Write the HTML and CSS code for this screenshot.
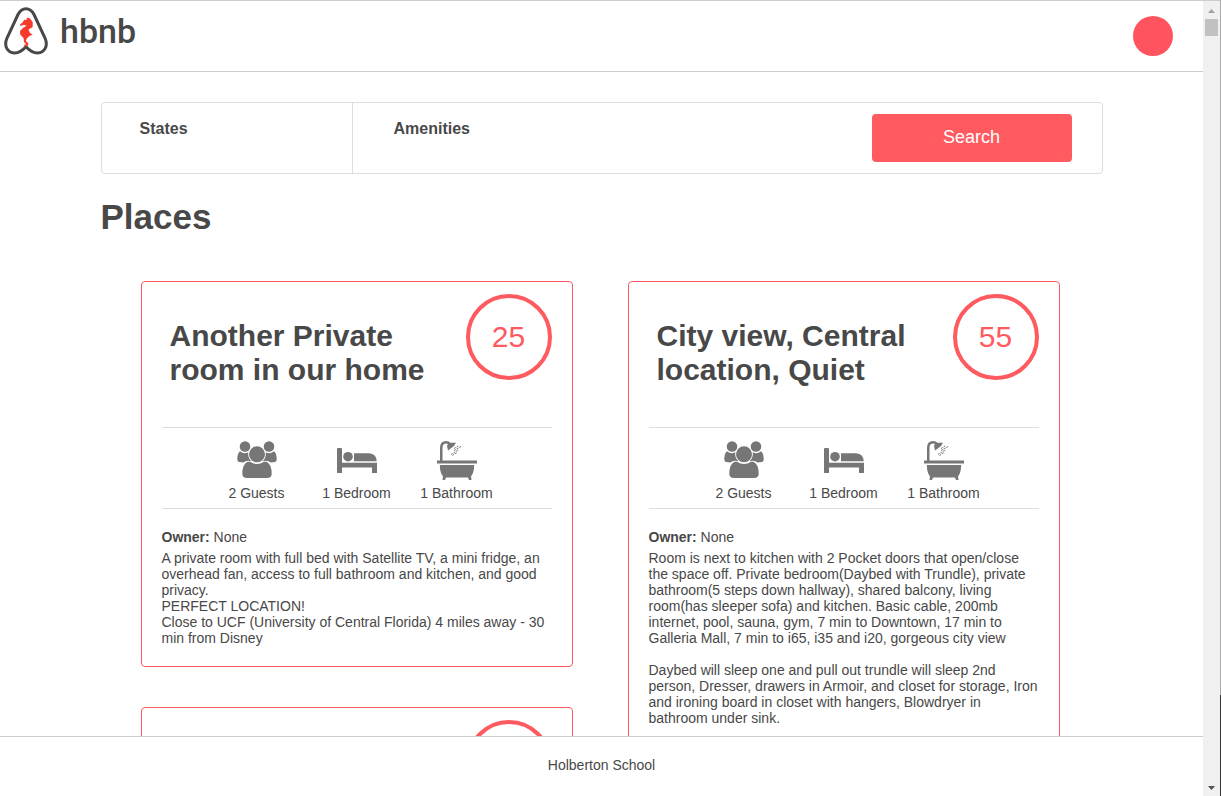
FILE: index.html
```html
<!DOCTYPE html>
<html lang="en">
<head>
<meta charset="utf-8">
<title>hbnb</title>
<link rel="stylesheet" href="styles.css">
</head>
<body>
<svg class="sprite" aria-hidden="true">
  <symbol id="guests" viewBox="0 0 40 40">
    <circle cx="8" cy="6.500" r="5.300"/><circle cx="32" cy="6.500" r="5.300"/>
    <path d="M3 11.200Q7 14.500 11.300 12.200Q10.500 18 14.500 21.200Q9 20 6.500 22.500L2 22Q.3 21.500 .3 19.500Q.3 13 3 11.200ZM37 11.200Q33 14.500 28.700 12.200Q29.500 18 25.500 21.200Q31 20 33.500 22.500L38 22Q39.700 21.500 39.700 19.500Q39.700 13 37 11.200Z"/>
    <circle cx="20" cy="14.300" r="8"/>
    <path d="M10.500 21.700H13Q20 26.500 27 21.700H29.500Q34.700 24 34.700 34Q34.500 38 30 38H10Q5.500 38 5.300 34Q5.300 24 10.500 21.700Z"/>
  </symbol>
  <symbol id="bed" viewBox="0 0 40 40">
    <path d="M0 9Q0 8 1 8H4Q5 8 5 9V22.700H40V33H35V27.500H5V33H0ZM17 13.300H32Q39.500 13.800 39.700 21.200H17Z"/>
    <circle cx="11" cy="16.700" r="4.800"/>
  </symbol>
  <symbol id="bath" viewBox="0 0 40 40">
    <path d="M3 21V8Q3 1 9 1Q12 1 13.500 2.700H19L17 6L11 10.500L10 6L11 4Q10 3.500 9 3.500Q5.500 3.500 5.500 8V21ZM0 20.500H40V23.500H0ZM2.800 25H37.200Q37 33 34 36.500L34.500 40H32L31 37.500H9L8 40H5.500L6 36.500Q3 33 2.800 25Z"/>
    <path class="drops" d="M17 8.500L22 5.500M17 10.500L24 6.500M14 14.500L22 9.500M15.500 15.500L20 12.500"/>
  </symbol>
</svg>
<div class="window">
  <div class="page">
    <header class="header">
      <a class="brand" href="#" aria-label="hbnb">
        <svg class="mark" viewBox="0 0 44 48" aria-hidden="true">
          <path class="mark-line" d="M22 1.700C26 1.700 28 3.500 30 7.500L41 31C44.500 39 40.500 45.700 33.500 46C29 46 25.500 43.500 22 39.700C18.500 43.500 15 46 10.500 46C3.500 45.700 -.5 39 3 31L14 7.500C16 3.500 18 1.700 22 1.700Z"/>
          <path class="horse" d="M23 10.500L26 11.500L28.700 15V20L24.500 22.500L26 26L28.700 27.500L25.500 29L22.700 31.500L22 34L24.500 36.500L23.700 39L20.500 39.200L20 37.500L22.500 37.500L20 35L19.500 31L16.200 27.500L16 24L19 21L22.500 18.700L20 17.700L16.300 19L16 17.500L19 15L20 12.700L22.500 13Z"/>
        </svg>
        <span class="brand-name">hbnb</span>
      </a>
      <span class="status"></span>
    </header>
    <main class="main">
      <div class="container">
        <section class="filters">
          <div class="filter states"><h3>States</h3></div>
          <div class="filter amenities"><h3>Amenities</h3></div>
          <button class="search" type="button">Search</button>
        </section>
        <h1 class="heading">Places</h1>
        <section class="places">
          <div class="column">
            <article class="card">
              <div class="card-head"><h2>Another Private room in our home</h2><div class="price">25</div></div>
              <ul class="facts">
                <li><svg><use href="#guests"/></svg>2 Guests</li>
                <li><svg><use href="#bed"/></svg>1 Bedroom</li>
                <li><svg><use href="#bath"/></svg>1 Bathroom</li>
              </ul>
              <p class="owner"><b>Owner:</b> None</p>
              <p class="description">A private room with full bed with Satellite TV, a mini fridge, an overhead fan, access to full bathroom and kitchen, and good privacy.<br>PERFECT LOCATION!<br>Close to UCF (University of Central Florida) 4 miles away - 30 min from Disney</p>
            </article>
            <article class="card">
              <div class="card-head"><div class="price"></div></div>
            </article>
          </div>
          <div class="column">
            <article class="card">
              <div class="card-head"><h2>City view, Central location, Quiet</h2><div class="price">55</div></div>
              <ul class="facts">
                <li><svg><use href="#guests"/></svg>2 Guests</li>
                <li><svg><use href="#bed"/></svg>1 Bedroom</li>
                <li><svg><use href="#bath"/></svg>1 Bathroom</li>
              </ul>
              <p class="owner"><b>Owner:</b> None</p>
              <p class="description">Room is next to kitchen with 2 Pocket doors that open/close the space off. Private bedroom(Daybed with Trundle), private bathroom(5 steps down hallway), shared balcony, living room(has sleeper sofa) and kitchen. Basic cable, 200mb internet, pool, sauna, gym, 7 min to Downtown, 17 min to Galleria Mall, 7 min to i65, i35 and i20, gorgeous city view<br><br>Daybed will sleep one and pull out trundle will sleep 2nd person, Dresser, drawers in Armoir, and closet for storage, Iron and ironing board in closet with hangers, Blowdryer in bathroom under sink.</p>
            </article>
          </div>
        </section>
      </div>
    </main>
    <footer class="footer">Holberton School</footer>
  </div>
  <div class="scrollbar" aria-hidden="true">
    <svg class="arrow up" viewBox="0 0 7 4"><path d="M0 4L3.500 0L7 4Z"/></svg>
    <div class="thumb"></div>
    <svg class="arrow down" viewBox="0 0 7 4"><path d="M0 0L3.500 4L7 0Z"/></svg>
  </div>
  <div class="edge"></div>
</div>
</body>
</html>
```
FILE: styles.css
```css
* { box-sizing: border-box; }
body { margin: 0; color: #484848; font: 14px/16px "Liberation Sans", Arial, sans-serif; background: #fff; }
h1, h2, h3, p, ul { margin: 0; padding: 0; }
.sprite { display: none; }
.window { display: flex; height: 100vh; overflow: hidden; }
.page { flex: 1; min-width: 0; display: flex; flex-direction: column; border-top: 1px solid #ccc; }
.header { display: flex; flex: none; align-items: center; justify-content: space-between; height: 71px; padding: 0 30px 0 4px; border-bottom: 1px solid #ccc; }
.brand { display: flex; gap: 12px; margin-bottom: 10px; color: #484848; text-decoration: none; }
.mark { width: 44px; height: 48px; }
.mark-line { fill: none; stroke: #484848; stroke-width: 3; }
.horse { fill: #f63b2b; }
.brand-name { font: 500 34px/48px Roboto, sans-serif; }
.status { width: 40px; height: 40px; border-radius: 50%; background: #ff545f; }
.main { flex: 1; min-height: 0; overflow: hidden; }
.container { max-width: 1002px; margin: 30px auto 0; }
.filters { display: flex; height: 72px; border: 1px solid #ddd; border-radius: 4px; }
.filter h3 { font-size: 16px; line-height: 18px; }
.filter { padding: 17px 0 0 38px; }
.states { width: 251px; border-right: 1px solid #ddd; }
.amenities { flex: 1; padding-left: 41px; }
.search { width: 200px; height: 48px; margin: 11px 30px 0 0; padding: 0 0 2px; border: 0; border-radius: 4px; color: #fff; background: #ff5a5f; font: 18px "Liberation Sans", Arial, sans-serif; }
.heading { margin-top: 22px; font-size: 35px; line-height: 42px; }
.places { display: flex; gap: 55px; padding: 43px 43px 0 40px; }
.column { flex: 1; display: flex; flex-direction: column; gap: 40px; }
.card { padding: 12px 20px 20px; border: 1px solid #ff5a5f; border-radius: 4px; }
.card-head { display: flex; justify-content: flex-end; gap: 20px; height: 133px; }
.card-head h2 { flex: 1; padding: 25px 0 0 8px; font-size: 30px; line-height: 34px; }
.price { flex: none; width: 86px; height: 86px; border: 4px solid #ff5a5f; border-radius: 50%; color: #ff5a5f; font-size: 30px; line-height: 78px; text-align: center; }
.facts { display: flex; justify-content: center; height: 82px; padding-top: 12px; border: solid #ddd; border-width: 1px 0; list-style: none; }
.facts li { width: 100px; text-align: center; }
.facts svg { display: block; width: 40px; height: 40px; margin: 0 auto 5px; fill: #767676; }
.drops { fill: none; stroke: #767676; stroke-width: 1; stroke-dasharray: 2 1; }
.owner { margin-top: 20px; }
.description { margin-top: 5px; }
.footer { flex: none; height: 60px; padding-top: 20px; border-top: 1px solid #ccc; text-align: center; background: #fff; }
.scrollbar { display: flex; flex-direction: column; align-items: center; width: 17px; padding: 8px 0 6px; border-top: 1px solid #ccc; background: #f0f0f0; }
.arrow { width: 7px; height: 4px; fill: #505050; }
.up { fill: #a3a3a3; }
.thumb { width: 13px; height: 17px; margin-top: 6px; background: #c1c1c1; }
.down { margin-top: auto; }
.edge { width: 1px; background: linear-gradient(#aaa 695px, #333 695px); }
```
